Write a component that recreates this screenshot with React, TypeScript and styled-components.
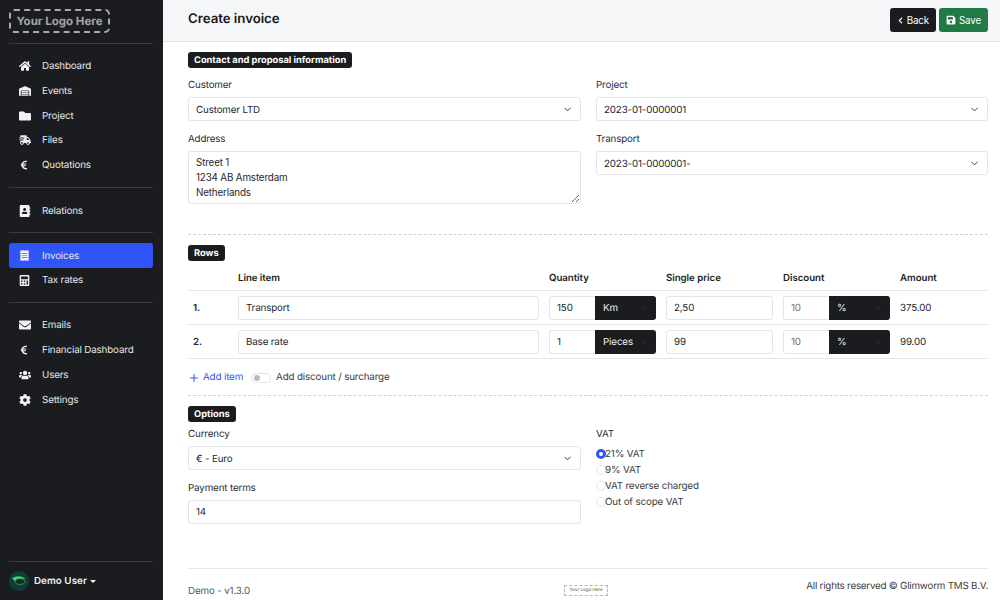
import React from 'react'
import styled, { createGlobalStyle } from 'styled-components'
import {
  FaAddressBook,
  FaCalculator,
  FaChevronLeft,
  FaCog,
  FaEnvelope,
  FaEuroSign,
  FaFolder,
  FaHome,
  FaReceipt,
  FaSave,
  FaShippingFast,
  FaUsers,
  FaWarehouse
} from 'react-icons/fa'
import { FiChevronDown, FiPlus } from 'react-icons/fi'

const GlobalStyle = createGlobalStyle`
  html, body { margin: 0; padding: 0; }
  body {
    font-family: Inter, "Liberation Sans", sans-serif;
    font-size: 9.8px;
    letter-spacing: -0.15px;
    text-rendering: geometricPrecision;
    color: #212529;
    background: #fff;
  }
  * { box-sizing: border-box; }
`

const navGroups = [
  [
    { label: 'Dashboard', icon: <FaHome /> },
    { label: 'Events', icon: <FaWarehouse /> },
    { label: 'Project', icon: <FaFolder /> },
    { label: 'Files', icon: <FaShippingFast /> },
    { label: 'Quotations', icon: <FaEuroSign size={10} /> }
  ],
  [{ label: 'Relations', icon: <FaAddressBook /> }],
  [
    { label: 'Invoices', icon: <FaReceipt size={11} />, active: true },
    { label: 'Tax rates', icon: <FaCalculator size={11} /> }
  ],
  [
    { label: 'Emails', icon: <FaEnvelope /> },
    { label: 'Financial Dashboard', icon: <FaEuroSign size={10} /> },
    { label: 'Users', icon: <FaUsers /> },
    { label: 'Settings', icon: <FaCog /> }
  ]
]

const rows = [
  { nr: '1.', item: 'Transport', qty: '150', unit: 'Km', price: '2,50', amount: '375.00' },
  { nr: '2.', item: 'Base rate', qty: '1', unit: 'Pieces', price: '99', amount: '99.00' }
]

const vatOptions = ['21% VAT', '9% VAT', 'VAT reverse charged', 'Out of scope VAT']

export default function App() {
  return (
    <Page>
      <GlobalStyle />
      <Sidebar>
        <LogoRow>
          <SideLogo>Your Logo Here</SideLogo>
        </LogoRow>
        {navGroups.map((group, i) => (
          <NavGroup key={i}>
            {group.map((entry) => (
              <NavItem key={entry.label} $active={entry.active}>
                <NavIcon>{entry.icon}</NavIcon>
                <NavLabel>{entry.label}</NavLabel>
              </NavItem>
            ))}
          </NavGroup>
        ))}
        <UserRow>
          <Avatar viewBox="0 0 20 20">
            <circle cx="10" cy="10" r="10" fill="#123c3c" />
            <path d="M3 7.5 C7 4.5 13 4.5 16.5 8 C13 7.5 9 8 6 10 Z" fill="#3fd267" />
            <ellipse cx="11" cy="10.5" rx="5" ry="3" fill="#1d2a22" stroke="#3fd267" strokeWidth="0.6" />
          </Avatar>
          <UserName>Demo User</UserName>
          <Caret />
        </UserRow>
      </Sidebar>

      <Main>
        <Header>
          <Title>Create invoice</Title>
          <HeaderActions>
            <ActionButton $color="#1a1c20">
              <FaChevronLeft size={7} />
              Back
            </ActionButton>
            <ActionButton $color="#217a46">
              <FaSave size={10} />
              Save
            </ActionButton>
          </HeaderActions>
        </Header>

        <Content>
          <Badge>Contact and proposal information</Badge>
          <TwoColumns $top={11}>
            <Column>
              <Field>
                <FieldLabel>Customer</FieldLabel>
                <SelectBox>
                  Customer LTD
                  <FiChevronDown size={11} />
                </SelectBox>
              </Field>
              <Field>
                <FieldLabel>Address</FieldLabel>
                <TextArea readOnly value={'Street 1\n1234 AB Amsterdam\nNetherlands'} />
              </Field>
            </Column>
            <Column>
              <Field>
                <FieldLabel>Project</FieldLabel>
                <SelectBox>
                  2023-01-0000001
                  <FiChevronDown size={11} />
                </SelectBox>
              </Field>
              <Field>
                <FieldLabel>Transport</FieldLabel>
                <SelectBox>
                  2023-01-0000001-
                  <FiChevronDown size={11} />
                </SelectBox>
              </Field>
            </Column>
          </TwoColumns>

          <DottedLine $top={30} />

          <Badge>Rows</Badge>
          <HeadRow>
            <span />
            <span>Line item</span>
            <span>Quantity</span>
            <span>Single price</span>
            <span>Discount</span>
            <span>Amount</span>
          </HeadRow>
          {rows.map((row) => (
            <TableRow key={row.nr}>
              <RowNumber>{row.nr}</RowNumber>
              <TextBox>{row.item}</TextBox>
              <InputGroup>
                <GroupInput>{row.qty}</GroupInput>
                <GroupSelect>
                  {row.unit}
                  <FiChevronDown size={9} />
                </GroupSelect>
              </InputGroup>
              <TextBox>{row.price}</TextBox>
              <InputGroup>
                <GroupInput $muted>10</GroupInput>
                <GroupSelect>
                  %
                  <FiChevronDown size={9} />
                </GroupSelect>
              </InputGroup>
              <AmountCell>{row.amount}</AmountCell>
            </TableRow>
          ))}
          <AddRow>
            <AddLink>
              <FiPlus size={12} />
              Add item
            </AddLink>
            <Toggle />
            Add discount / surcharge
          </AddRow>

          <DottedLine $top={0} />

          <Badge>Options</Badge>
          <TwoColumns $top={6}>
            <Column>
              <Field>
                <FieldLabel>Currency</FieldLabel>
                <SelectBox>
                  € - Euro
                  <FiChevronDown size={11} />
                </SelectBox>
              </Field>
              <Field>
                <FieldLabel>Payment terms</FieldLabel>
                <TextBox>14</TextBox>
              </Field>
            </Column>
            <Column>
              <Field>
                <FieldLabel>VAT</FieldLabel>
                <RadioList>
                  {vatOptions.map((option, i) => (
                    <RadioRow key={option}>
                      <RadioDot $checked={i === 0} />
                      {option}
                    </RadioRow>
                  ))}
                </RadioList>
              </Field>
            </Column>
          </TwoColumns>
        </Content>

        <Footer>
          <FooterText>Demo - v1.3.0</FooterText>
          <FooterLogo>Your Logo Here</FooterLogo>
          <FooterRights>All rights reserved © Glimworm TMS B.V.</FooterRights>
        </Footer>
      </Main>
    </Page>
  )
}

const Page = styled.div`
  display: flex;
  width: 1000px;
  height: 600px;
  overflow: hidden;
`

const Sidebar = styled.aside`
  display: flex;
  flex-direction: column;
  width: 163px;
  flex: none;
  padding: 0 10px 0 9px;
  background: #1a1c20;
  color: #e6e7e9;
`

const LogoRow = styled.div`
  display: flex;
  height: 44px;
  padding-top: 9px;
  border-bottom: 1px solid #3a3c40;
`

const SideLogo = styled.div`
  display: flex;
  align-items: center;
  justify-content: center;
  width: 101px;
  height: 24px;
  border: 2px dashed #a9aaac;
  border-radius: 5px;
  color: #a3a4a6;
  font-size: 11.5px;
  font-weight: 700;
  letter-spacing: 0;
  white-space: nowrap;
`

const NavGroup = styled.nav`
  display: flex;
  flex-direction: column;
  padding: 10px 0 9.3px;
  border-bottom: 1px solid #3a3c40;

  &:nth-of-type(1) {
    padding-bottom: 10px;
  }

  &:nth-of-type(4) {
    flex: 1;
  }
`

const NavItem = styled.div<{ $active?: boolean }>`
  display: flex;
  align-items: center;
  height: 24.7px;
  padding-left: 10px;
  border-radius: 3px;
  background: ${(p) => (p.$active ? '#2f54f7' : 'transparent')};
`

const NavIcon = styled.span`
  display: flex;
  align-items: center;
  width: 23px;
  font-size: 12px;
  color: #f2f2f3;
`

const NavLabel = styled.span`
  padding-top: 1px;
`

const UserRow = styled.div`
  display: flex;
  align-items: center;
  height: 38px;
  color: #f0f0f1;
`

const Avatar = styled.svg`
  width: 20px;
  height: 20px;
  margin-right: 5px;
`

const UserName = styled.span`
  font-weight: 600;
  letter-spacing: 0.05px;
`

const Caret = styled.span`
  width: 0;
  height: 0;
  margin-left: 3px;
  border-left: 3px solid transparent;
  border-right: 3px solid transparent;
  border-top: 3px solid #f0f0f1;
`

const Main = styled.main`
  display: flex;
  flex-direction: column;
  flex: 1;
  min-width: 0;
`

const Header = styled.header`
  display: flex;
  align-items: center;
  justify-content: space-between;
  height: 42px;
  padding: 0 12px 2px 25px;
  background: #f5f6f8;
  border-bottom: 1px solid #e3e5e9;
`

const Title = styled.h1`
  margin: 0 0 2px;
  font-size: 13.3px;
  font-weight: 600;
  letter-spacing: -0.05px;
  color: #17191c;
`

const HeaderActions = styled.div`
  display: flex;
  gap: 3px;
`

const ActionButton = styled.button<{ $color: string }>`
  display: flex;
  align-items: center;
  gap: 3px;
  height: 24px;
  padding: 1px 7px 0;
  border: none;
  border-radius: 3px;
  font: inherit;
  letter-spacing: inherit;
  color: #fff;
  background: ${(p) => p.$color};
`

const Content = styled.div`
  display: flex;
  flex-direction: column;
  flex: 1;
  align-items: stretch;
  padding: 10px 12px 0 25px;
`

const Badge = styled.span`
  align-self: flex-start;
  padding: 0 6px;
  height: 16px;
  line-height: 17px;
  border-radius: 3px;
  background: #1a1c20;
  color: #fff;
  font-size: 9.3px;
  font-weight: 700;
  letter-spacing: 0;
`

const TwoColumns = styled.div<{ $top: number }>`
  display: grid;
  grid-template-columns: 393px 392px;
  column-gap: 15px;
  margin-top: ${(p) => p.$top}px;
`

const Column = styled.div`
  display: flex;
  flex-direction: column;
  gap: 12px;
`

const Field = styled.div`
  display: flex;
  flex-direction: column;
`

const FieldLabel = styled.label`
  height: 12px;
  line-height: 14px;
  margin-bottom: 6px;
  color: #2b2e32;
`

const SelectBox = styled.div`
  display: flex;
  align-items: center;
  justify-content: space-between;
  height: 24px;
  padding: 2px 7px 0;
  border: 1px solid #e3e5e9;
  border-radius: 3px;
  background: #fff;
  color: #25282c;

  svg {
    margin-top: -2px;
  }
`

const TextArea = styled.textarea`
  display: block;
  height: 53px;
  padding: 3px 7px;
  border: 1px solid #e3e5e9;
  border-radius: 3px;
  font: inherit;
  letter-spacing: inherit;
  line-height: 15px;
  color: #25282c;
  outline: none;
  resize: vertical;
  overflow: hidden;
`

const DottedLine = styled.div<{ $top: number }>`
  margin: ${(p) => p.$top}px 0 10px;
  border-top: 1px dashed #cfd1d4;
`

const gridColumns = `
  display: grid;
  grid-template-columns: 40px 301px 107px 107px 107px 88px;
  column-gap: 10px;
  align-items: center;
`

const HeadRow = styled.div`
  ${gridColumns}
  height: 30px;
  padding-top: 6px;
  border-bottom: 1px solid #e3e5e9;
  font-size: 9.7px;
  font-weight: 600;
  letter-spacing: -0.05px;
  color: #1c1e22;
`

const TableRow = styled.div`
  ${gridColumns}
  height: 34px;
  border-bottom: 1px solid #e3e5e9;
  color: #25282c;
`

const RowNumber = styled.span`
  padding: 1px 0 0 5px;
  font-weight: 600;
`

const AmountCell = styled.span`
  padding-top: 1px;
`

const TextBox = styled.div`
  display: flex;
  align-items: center;
  height: 24px;
  padding: 1px 7px 0;
  border: 1px solid #e3e5e9;
  border-radius: 3px;
  background: #fff;
  color: #25282c;
`

const InputGroup = styled.div`
  display: flex;
  height: 24px;
`

const GroupInput = styled.div<{ $muted?: boolean }>`
  display: flex;
  align-items: center;
  width: 46px;
  padding: 1px 0 0 7px;
  border: 1px solid #e3e5e9;
  border-right: none;
  border-radius: 3px 0 0 3px;
  color: ${(p) => (p.$muted ? '#6f7276' : '#25282c')};
`

const GroupSelect = styled.div`
  display: flex;
  flex: 1;
  align-items: center;
  justify-content: space-between;
  padding: 1px 8px 0;
  border-radius: 0 3px 3px 0;
  background: #1a1c20;
  color: #f0f0f1;

  svg {
    color: #3c3f44;
  }
`

const AddRow = styled.div`
  display: flex;
  align-items: center;
  height: 36px;
  padding-top: 1px;
  color: #3a3d41;
`

const AddLink = styled.span`
  display: flex;
  align-items: center;
  gap: 3px;
  margin-right: 8px;
  color: #2f54f7;
`

const Toggle = styled.span`
  position: relative;
  width: 20px;
  height: 10px;
  margin-right: 5px;
  border: 1px solid #e3e5e9;
  border-radius: 5px;

  &::after {
    content: '';
    position: absolute;
    left: 2px;
    top: 1px;
    width: 6px;
    height: 6px;
    border-radius: 50%;
    background: #b9babc;
  }
`

const RadioList = styled.div`
  display: flex;
  flex-direction: column;
`

const RadioRow = styled.div`
  display: flex;
  align-items: center;
  height: 16px;
  color: #3a3d41;
`

const RadioDot = styled.span<{ $checked?: boolean }>`
  width: 10px;
  height: 10px;
  margin-right: -1px;
  border-radius: 50%;
  border: ${(p) => (p.$checked ? '3px solid #2f54f7' : '1px solid #e3e5e9')};
  background: #fff;
`

const Footer = styled.footer`
  display: grid;
  grid-template-columns: 376px 44px 1fr;
  align-items: center;
  height: 32px;
  margin: 0 12px 0 25px;
  border-top: 1px solid #e9eaec;
`

const FooterText = styled.span`
  padding-top: 14px;
  color: #55585c;
`

const FooterLogo = styled.div`
  display: flex;
  align-items: center;
  justify-content: center;
  width: 44px;
  height: 11px;
  margin-top: 12px;
  border: 1px dashed #b5b6b8;
  border-radius: 1px;
  color: #8a8b8d;
  font-size: 4.5px;
  font-weight: 600;
  letter-spacing: 0;
  white-space: nowrap;
`

const FooterRights = styled.span`
  justify-self: end;
  padding-top: 3px;
  letter-spacing: -0.22px;
  color: #3a3d41;
`
